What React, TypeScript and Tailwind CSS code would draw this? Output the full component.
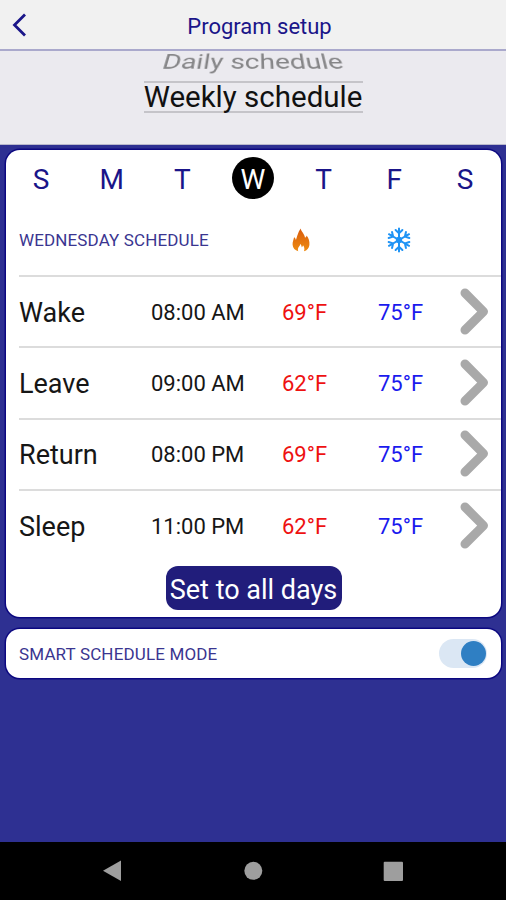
import React from "react";

const days = ["S", "M", "T", "W", "T", "F", "S"];

const periods = [
  { name: "Wake", time: "08:00 AM", heat: "69°F", cool: "75°F" },
  { name: "Leave", time: "09:00 AM", heat: "62°F", cool: "75°F" },
  { name: "Return", time: "08:00 PM", heat: "69°F", cool: "75°F" },
  { name: "Sleep", time: "11:00 PM", heat: "62°F", cool: "75°F" },
];

function Flame() {
  return (
    <svg width="18" height="24" viewBox="0 0 18 24">
      <defs>
        <linearGradient id="flame" x1="0" y1="0" x2="0" y2="1">
          <stop offset="0" stopColor="#d95b0c" />
          <stop offset="1" stopColor="#ee8c12" />
        </linearGradient>
      </defs>
      <path
        fill="url(#flame)"
        d="M8.8 0.5C8.7 3.2 12.6 5.6 13 9.8C14 9.4 14.5 8.6 14.6 7.6C16.6 10 17.8 13.6 17.4 17C17 20.2 15 22.5 12 23.3C12.8 21 12.4 19 11 17.3C10.8 18.4 10.3 19 9.7 19.2C9.6 17.6 9 16.5 8.2 15.9C8.2 18 6 19 5.9 21.2C5.9 22 6 22.7 6.3 23.3C3 22.5 0.8 20 0.6 16.8C0.4 13.8 1.6 11.8 2.1 9.2C3.2 10 3.7 10.9 3.9 11.9C5.2 9 5.6 4.6 8.8 0.5Z"
      />
    </svg>
  );
}

function Snowflake() {
  return (
    <svg width="24" height="26" viewBox="-12 -13 24 26" fill="none" stroke="#1e93f5" strokeWidth="2" strokeLinecap="round" strokeLinejoin="round">
      {[0, 60, 120, 180, 240, 300].map((angle) => (
        <path key={angle} transform={`rotate(${angle})`} d="M0 0V-11.6M-3.4 -10L0 -6.8L3.4 -10" />
      ))}
      <circle r="2.2" />
    </svg>
  );
}

function PeriodRow({ name, time, heat, cool }: (typeof periods)[number]) {
  return (
    <div className="ml-[13px] flex h-[71.3px] items-center border-t-2 border-[#dcdcdc] text-[22px]">
      <span className="w-[132px] pt-[3px] text-[27px] text-[#161616]">{name}</span>
      <span className="w-[131px] pt-[2px] text-[#161616]">{time}</span>
      <span className="w-[96px] pt-[2px] text-[#ee1111]">{heat}</span>
      <span className="w-[81px] pt-[2px] text-[#1a1aee]">{cool}</span>
      <svg width="30" height="48" viewBox="0 0 30 48" fill="none" stroke="#a9a9a9" strokeWidth="9" strokeLinecap="round" strokeLinejoin="round">
        <path d="M6 5L24.5 23.6L6 42" />
      </svg>
    </div>
  );
}

export default function App() {
  return (
    <div className="flex h-[900px] w-[506px] flex-col overflow-hidden bg-[#2e3092] font-['Roboto',sans-serif] leading-none whitespace-nowrap">
      <header className="grid h-[51px] grid-cols-[1fr_auto_1fr] items-center border-b-2 border-[#aaa9cc] bg-[#f1f1f1]">
        <svg className="ml-3" width="15" height="24" viewBox="0 0 15 24" fill="none" stroke="#1a1589" strokeWidth="2.8">
          <path d="M13 1.5L2.5 12L13 22.5" />
        </svg>
        <h1 className="mt-1 ml-[13px] text-[22px] text-[#1a1589]">Program setup</h1>
      </header>

      <section className="flex h-[94px] flex-col items-center border-b border-[#b9b9cc] bg-[#ebeaef]">
        <div className="flex h-[30px] items-start">
          <span className="text-[28px] text-[#858587] [transform:translateY(-3px)_perspective(270px)_rotateX(43deg)]">Daily schedule</span>
        </div>
        <div className="flex h-[32px] w-[219px] items-center justify-center border-y-2 border-[#c5c4c9] pt-[2px] text-[29.5px] text-[#111]">
          Weekly schedule
        </div>
      </section>

      <main className="flex grow flex-col gap-3 pt-[5px] pr-[5px] pl-[6px]">
        <section className="flex h-[466.5px] flex-col rounded-[14px] bg-white shadow-[0_0_0_1.5px_#0c0880]">
          <div className="flex h-[56px] items-center justify-between pr-[15px] pl-[14px] text-[28px] text-[#1a1589]">
            {days.map((day, i) => (
              <span
                key={i}
                className={
                  i === 3
                    ? "flex size-[42px] items-center justify-center rounded-full bg-black pt-[3px] text-white"
                    : "flex size-[42px] items-center justify-center pt-[3px]"
                }
              >
                {day}
              </span>
            ))}
          </div>
          <div className="flex h-[69px] items-center pl-[13px]">
            <h2 className="w-[273px] text-[17px] tracking-[0.13px] text-[#3a3590]">WEDNESDAY SCHEDULE</h2>
            <span className="w-[95px] pb-px"><Flame /></span>
            <span className="pb-[2px]"><Snowflake /></span>
          </div>
          {periods.map((p) => (
            <PeriodRow key={p.name} {...p} />
          ))}
          <button className="mx-auto mt-[6px] flex h-[44px] w-[176px] items-center justify-center rounded-[12px] bg-[#211d7b] pt-[4px] text-[27px] text-white">
            Set to all days
          </button>
        </section>

        <section className="flex h-[49px] items-center justify-between rounded-[14px] bg-white pr-[14px] pl-[13px] shadow-[0_0_0_1.5px_#0c0880]">
          <h2 className="pt-[2px] text-[17px] tracking-[0.15px] text-[#3a3590]">SMART SCHEDULE MODE</h2>
          <div className="flex h-[29px] w-[48px] items-center justify-end rounded-full bg-[#dbe7f4] pr-[1px]">
            <div className="size-[25px] rounded-full bg-[#2f7fc3]" />
          </div>
        </section>
      </main>

      <nav className="h-[58px] bg-black">
        <svg width="506" height="58" viewBox="0 842 506 58" fill="#9e9e9e">
          <path d="M103 870.8L121 860.5V881Z" />
          <circle cx="253.3" cy="870.8" r="9" />
          <rect x="383.7" y="861.7" width="19.3" height="19.3" rx="1" />
        </svg>
      </nav>
    </div>
  );
}
